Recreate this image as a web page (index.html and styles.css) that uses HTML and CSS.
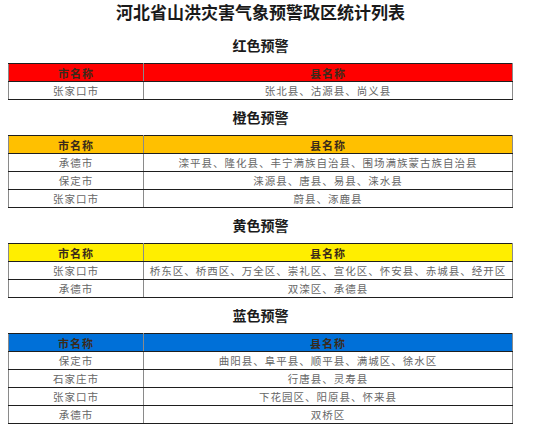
FILE: index.html
```html
<!DOCTYPE html>
<html lang="zh">
<head>
<meta charset="utf-8">
<link rel="stylesheet" href="styles.css">
</head>
<body>
<div class="page">
  <h1 class="title">河北省山洪灾害气象预警政区统计列表</h1>

  <h2 class="level">红色预警</h2>
  <table class="warn red">
    <tr class="head"><th class="c1">市名称</th><th>县名称</th></tr>
    <tr><td class="c1">张家口市</td><td>张北县、沽源县、尚义县</td></tr>
  </table>

  <h2 class="level">橙色预警</h2>
  <table class="warn orange">
    <tr class="head"><th class="c1">市名称</th><th>县名称</th></tr>
    <tr><td class="c1">承德市</td><td>滦平县、隆化县、丰宁满族自治县、围场满族蒙古族自治县</td></tr>
    <tr><td class="c1">保定市</td><td>涞源县、唐县、易县、涞水县</td></tr>
    <tr><td class="c1">张家口市</td><td>蔚县、涿鹿县</td></tr>
  </table>

  <h2 class="level">黄色预警</h2>
  <table class="warn yellow">
    <tr class="head"><th class="c1">市名称</th><th>县名称</th></tr>
    <tr><td class="c1">张家口市</td><td>桥东区、桥西区、万全区、崇礼区、宣化区、怀安县、赤城县、经开区</td></tr>
    <tr><td class="c1">承德市</td><td>双滦区、承德县</td></tr>
  </table>

  <h2 class="level">蓝色预警</h2>
  <table class="warn blue">
    <tr class="head"><th class="c1">市名称</th><th>县名称</th></tr>
    <tr><td class="c1">保定市</td><td>曲阳县、阜平县、顺平县、满城区、徐水区</td></tr>
    <tr><td class="c1">石家庄市</td><td>行唐县、灵寿县</td></tr>
    <tr><td class="c1">张家口市</td><td>下花园区、阳原县、怀来县</td></tr>
    <tr><td class="c1">承德市</td><td>双桥区</td></tr>
  </table>
</div>
</body>
</html>
```

FILE: styles.css
```css
html, body {
  margin: 0;
  padding: 0;
  background: #ffffff;
}

.page {
  padding: 0 20px 0 8px;
  font-family: "Noto Sans CJK SC", "Noto Sans", sans-serif;
  color: #222;
}

.title {
  margin: 0;
  height: 28px;
  line-height: 24px;
  font-size: 17px;
  font-weight: 700;
  text-align: center;
  color: #1a1a1a;
}

.level {
  margin: 0;
  height: 35px;
  line-height: 35px;
  font-size: 14px;
  font-weight: 700;
  text-align: center;
  color: #1a1a1a;
}

.warn {
  width: 505px;
  border-collapse: collapse;
  table-layout: fixed;
}

.warn th,
.warn td {
  padding: 0;
  text-align: center;
  border-top: 1px solid #1e1e1e;
  border-bottom: 1px solid #1e1e1e;
  border-left: 1px solid #8a8a8a;
  border-right: 1px solid #8a8a8a;
  white-space: nowrap;
}

.warn .c1 {
  width: 134px;
}

.warn th {
  height: 17px;
  font-size: 11px;
  font-weight: 700;
  color: #3a2a1a;
  letter-spacing: 1px;
}

.warn td {
  height: 17px;
  font-size: 10.5px;
  font-weight: 400;
  color: #666;
  letter-spacing: 1px;
}

.red .head th { background: #ff0000; }
.orange .head th { background: #ffc000; }
.yellow .head th { background: #ffee00; }
.blue .head th { background: #0070d8; }
```
